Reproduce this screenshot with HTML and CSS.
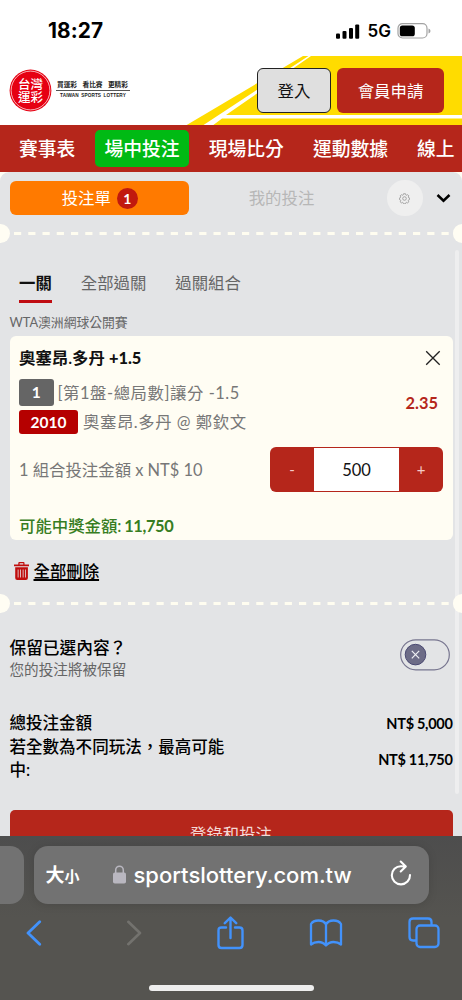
FILE: index.html
```html
<!DOCTYPE html>
<html lang="zh-Hant">
<head>
<meta charset="utf-8">
<meta name="viewport" content="width=device-width, initial-scale=1">
<title>台灣運彩</title>
<link rel="stylesheet" href="styles.css">
</head>
<body>
<div class="phone">
  <div class="status">
    <span class="clock">18:27</span>
    <div class="status-right">
      <svg width="24" height="15" viewBox="0 0 24 15"><rect x="0" y="9.5" width="4" height="5.3" rx="1.1"/><rect x="6.5" y="7" width="4" height="7.8" rx="1.1"/><rect x="13" y="4" width="4" height="10.8" rx="1.1"/><rect x="19.2" y="0.5" width="4" height="14.3" rx="1.1"/></svg>
      <span class="net">5G</span>
      <svg width="34" height="16" viewBox="0 0 34 16"><rect x="1" y=".7" width="29" height="14.3" rx="4.5" fill="none" stroke="#a2a2a2" stroke-width="1.2"/><rect x="2.8" y="2.5" width="15" height="10.8" rx="2.6"/><path d="M31.5 5.4q2 .8 2 2.5t-2 2.5z" fill="#a2a2a2"/></svg>
    </div>
  </div>

  <header class="site">
    <svg class="stripes" width="462" height="70" viewBox="0 0 462 70"><path fill="#ffdc00" d="M303 0H462V70H185z"/><path fill="#fff" d="M311 0H308.500L202 70H212L222 62.5H462V59H226z"/></svg>
    <div class="brand">
      <svg width="43" height="43" viewBox="0 0 43 43"><circle cx="21.5" cy="21.5" r="20.9" fill="#e60012"/><circle cx="21.5" cy="21.5" r="19.4" fill="none" stroke="#fff" stroke-width=".7"/><text class="seal" x="9" y="19.800" textLength="25">台灣</text><text class="seal" x="9" y="32.600" textLength="25">運彩</text></svg>
      <div class="tagline"><div class="tag-zh"><span>買運彩</span><span>看比賽</span><span>更精彩</span></div><div class="tag-en">TAIWAN SPORTS LOTTERY</div></div>
    </div>
    <div class="login">登入</div>
    <div class="signup">會員申請</div>
  </header>

  <nav class="nav"><span>賽事表</span><span class="on">場中投注</span><span>現場比分</span><span>運動數據</span><span>線上</span></nav>

  <div class="backing">
  <main class="slip">
    <div class="slip-head">
      <div class="slip-tab">投注單<b class="count">1</b></div>
      <div class="mine">我的投注</div>
      <div class="gear"><svg width="11" height="11" viewBox="0 0 22 22" fill="none" stroke="#999" stroke-width="1.7"><path d="M9 1.5h4l.6 2.3 1.7.8 2.1-1.2 2.3 2.3-1.2 2.1.8 1.7 2 .5v3l-2 .7-.8 1.8 1.2 2.1-2.3 2.3-2.1-1.2-1.7.8-.6 2.1H9l-.6-2.1-1.7-.8-2.1 1.2-2.3-2.3 1.2-2.1-.8-1.8-2-.7v-3l2-.5.8-1.7-1.2-2.1 2.3-2.3 2.1 1.2 1.7-.8z"/><circle cx="11" cy="11" r="3.600"/></svg></div>
      <svg class="chev" width="15" height="10" viewBox="0 0 15 10"><path d="M1.5 2l6 5.7 6-5.7" fill="none" stroke="#000" stroke-width="2.5"/></svg>
    </div>
    <div class="tear"><i class="notch"></i><svg width="442" height="3"><path d="M4 1.5H442" stroke="#fffdf0" stroke-width="3" stroke-dasharray="7.2 7.05"/></svg><i class="notch end"></i></div>

    <div class="tabs"><span class="on">一關</span><span>全部過關</span><span>過關組合</span></div>
    <div class="league">WTA澳洲網球公開賽</div>

    <section class="card">
      <div class="title"><span>奧塞昂.多丹 <b>+1.5</b></span><svg width="16" height="16" viewBox="0 0 16 16"><path d="M1.2 1.2l13.5 13.5M14.7 1.2L1.2 14.7" stroke="#222" stroke-width="1.3"/></svg></div>
      <div class="pick">
        <div class="lines">
          <div class="line one"><b>1</b><span>[第1盤-總局數]讓分 -1.5</span></div>
          <div class="line two"><b>2010</b><span>奧塞昂.多丹 @ 鄭欽文</span></div>
        </div>
        <div class="odds">2.35</div>
      </div>
      <div class="stake"><span>1 組合投注金額 x NT$ 10</span>
        <div class="stepper"><i>-</i><em>500</em><i>+</i></div>
      </div>
      <div class="win">可能中獎金額: <b>11,750</b></div>
    </section>

    <div class="clear"><svg width="15" height="18" viewBox="0 0 15 18"><path fill="#c00d0d" fill-rule="evenodd" d="M0 2.5h4.3V1q0-1 1-1h4.2q1 0 1 1v1.500H15V4.300H0zM5.600 2.500h3.700V1.300H5.600zM1.200 5.300h12.700V16q0 2-2 2H3.200q-2 0-2-2zM3.700 7.500v8h.8v-8zm2.500 0v8h.8v-8zm2.500 0v8h.8v-8zm2.300 0v8h.8v-8z"/></svg><span>全部刪除</span></div>
    <div class="tear second"><i class="notch"></i><svg width="442" height="3"><path d="M4 1.5H442" stroke="#fffdf0" stroke-width="3" stroke-dasharray="7.2 7.05"/></svg><i class="notch end"></i></div>

    <div class="keep">
      <div><div class="keep-q">保留已選內容？</div><div class="keep-a">您的投注將被保留</div></div>
      <svg width="50" height="32" viewBox="0 0 50 32"><rect x=".7" y=".8" width="48.600" height="30" rx="15" fill="none" stroke="#77758f" stroke-width="1.2"/><circle cx="15.500" cy="15.600" r="10.300" fill="#6d6c87" stroke="#494871" stroke-width="1"/><path d="M11.800 11.900l7.400 7.400m0-7.400l-7.400 7.400" stroke="#f0f0f4" stroke-width="1.200"/></svg>
    </div>
    <div class="totals">
      <div class="total"><span>總投注金額</span><b>NT$ 5,000</b></div>
      <div class="total tall"><span>若全數為不同玩法，最高可能中:</span><b>NT$ 11,750</b></div>
    </div>
    <div class="submit">登錄和投注</div>
    <div class="scrollbar"></div>
  </main>
  </div>

  <footer class="browser">
    <div class="url-row">
      <div class="prev-tab"></div>
      <div class="url">
        <span class="aa">大<small>小</small></span>
        <svg class="lock" width="13" height="19" viewBox="0 0 13 19"><rect y="7.500" width="13" height="11" rx="1.800" fill="#b9b7c0"/><path d="M2.700 8V5.200a3.800 4 0 0 1 7.600 0V8" fill="none" stroke="#b9b7c0" stroke-width="1.500"/></svg>
        <span class="host">sportslottery.com.tw</span>
        <svg class="reload" width="22" height="26" viewBox="0 0 22 26" fill="none" stroke="#fff" stroke-width="2.100" stroke-linecap="round" stroke-linejoin="round"><path d="M20 15A9.100 9.100 0 1 1 11 6.200q2.500-.1 4.500.5M10.700 1.500l5.100 5-5.100 5"/></svg>
      </div>
    </div>
    <div class="tools">
      <svg width="16" height="26" viewBox="0 0 16 26"><path d="M13.700 1.800L2 13l11.700 11.200" fill="none" stroke="#4292fb" stroke-width="2.800" stroke-linecap="round" stroke-linejoin="round"/></svg>
      <svg width="16" height="26" viewBox="0 0 16 26"><path d="M2.300 1.800L14 13 2.300 24.200" fill="none" stroke="#73726e" stroke-width="2.600" stroke-linecap="round" stroke-linejoin="round"/></svg>
      <svg width="27" height="34" viewBox="0 0 27 34" fill="none" stroke="#4292fb" stroke-width="2.400" stroke-linecap="round" stroke-linejoin="round"><path d="M9 11.500H4.500q-3 0-3 3v14.500q0 3 3 3h18q3 0 3-3V14.500q0-3-3-3H18M13.500 22V2M7.800 7.200L13.500 1.500l5.700 5.700"/></svg>
      <svg width="34" height="28" viewBox="0 0 34 28" fill="none" stroke="#4292fb" stroke-width="2.300" stroke-linejoin="round"><path d="M17 5.500Q15 1.500 9.500 1.500T2 5v20.500q3-2.500 7.500-2.500t7.500 3.500q3-3.500 7.500-3.500t7.500 2.500V5q-2-3.500-7.500-3.500T17 5.500zv21"/></svg>
      <svg width="32" height="32" viewBox="0 0 32 32" fill="none" stroke="#4292fb" stroke-width="2.300"><rect x="8.500" y="8.500" width="22" height="21.500" rx="3.500"/><path d="M8.500 23.500H5q-3.500 0-3.500-3.500V5q0-3.500 3.500-3.500h15q3.500 0 3.500 3.500v3.500"/></svg>
    </div>
    <div class="home"></div>
  </footer>
</div>
</body>
</html>
```
FILE: styles.css
```css
* { box-sizing: border-box; }
body { margin: 0; background: #fff; font-family: Lato, "Noto Sans CJK TC", sans-serif; font-size: 16.4px; line-height: 24px; color: #111; }
svg { display: block; flex: none; }
i, em { font-style: normal; }
.phone { width: 462px; height: 1000px; overflow: hidden; display: flex; flex-direction: column; white-space: nowrap; }

.status { height: 56px; display: flex; justify-content: space-between; padding: 19px 31px 0 48px; font-family: Inter, sans-serif; color: #000; }
.clock { font-size: 20.800px; font-weight: 700; letter-spacing: .1px; }
.status-right { display: flex; align-items: center; height: 24px; }
.net { font-size: 17px; font-weight: 600; margin: 0 6px 0 8px; }

.site { height: 69px; display: flex; align-items: flex-start; position: relative; padding: 12px 18px 0 9px; }
.stripes { position: absolute; left: 0; top: 0; }
.brand { position: relative; display: flex; width: 248px; padding-top: 1px; }
.seal { font: 500 12.500px "Noto Sans CJK TC", sans-serif; fill: #fff; }
.tagline { width: 74px; margin: 8px 0 0 4px; color: #222; }
.tag-zh { display: flex; justify-content: space-between; padding: 0 2px 0 1px; height: 14px; border-bottom: 1px solid #555; font-size: 6.700px; line-height: 14px; font-weight: 700; }
.tag-en { font: 700 4.700px/10px "Liberation Sans", sans-serif; text-align: center; word-spacing: 1px; letter-spacing: .1px; }
.login, .signup { position: relative; height: 45px; border-radius: 6px; display: flex; align-items: center; justify-content: center; }
.login { width: 74px; border: 1.500px solid #222; background: #dfdfdf; }
.signup { width: 107px; margin-left: 6px; background: #b5261b; color: #fff; }

.nav { height: 47px; background: #b5261b; display: flex; align-items: center; gap: 10.100px; padding: 0 0 0 9.500px; color: #fff; font-size: 18.800px; font-weight: 500; position: relative; z-index: 1; }
.nav span { height: 37px; line-height: 37px; padding: 0 9.500px; border-radius: 5px; flex: none; }
.nav .on { background: #00ba14; }

.backing { height: 664px; background: #fffdf3; overflow: hidden; }
.slip { position: relative; height: 664px; background: #e3e4e6; border-radius: 9px 9px 0 0; padding: 9px 9.500px 0; }
.slip-head { height: 34px; display: flex; align-items: center; }
.slip-tab { width: 179.500px; height: 34px; background: #ff7a00; border-radius: 6px; color: #fff; display: flex; align-items: center; justify-content: center; gap: 6px; padding-left: 1px; }
.count { width: 21px; height: 21px; border-radius: 50%; background: #c1190e; font-size: 14px; line-height: 21px; text-align: center; }
.mine { width: 185px; text-align: center; color: #b7b7b7; }
.gear { width: 35.500px; height: 35.500px; margin-left: 13px; border-radius: 50%; background: #efefef; display: grid; place-items: center; }
.chev { margin-left: 13.500px; }
.tear { position: relative; z-index: 1; height: 19px; margin: 9px -9.500px 0; display: flex; align-items: center; justify-content: space-between; }
.notch { width: 9.500px; height: 19px; background: #fffdf3; border-radius: 0 10px 10px 0; }
.notch.end { border-radius: 10px 0 0 10px; }

.tabs { height: 32px; margin-top: 28px; padding-left: 9.500px; display: flex; gap: 29px; color: #666; }
.tabs span { line-height: 24px; }
.tabs .on { color: #111; font-weight: 700; border-bottom: 3.500px solid #c00d12; }
.league { font-size: 12.800px; line-height: 18px; color: #666; margin: 10px 0 5px; }
.card { height: 204px; background: #fffdf3; border-radius: 6px; padding: 9.500px 9.500px 0; color: #777; }
.title { display: flex; justify-content: space-between; align-items: center; padding-right: 2px; font-weight: 600; color: #111; }
.pick { display: flex; justify-content: space-between; align-items: center; margin-top: 8.500px; padding-right: 5px; }
.line { display: flex; align-items: center; height: 29px; letter-spacing: .55px; }
.line b { border-radius: 3px; color: #fff; text-align: center; font-size: 15.500px; letter-spacing: 0; flex: none; }
.one b { width: 34.500px; height: 26.500px; line-height: 26px; margin-right: 4px; background: #656565; }
.two b { width: 59px; height: 24px; line-height: 24px; margin-right: 5px; background: #b50000; }
.odds { color: #b5261b; font-weight: 700; padding-bottom: 8px; font-size: 16.400px; }
.stake { display: flex; justify-content: space-between; align-items: center; margin-top: 10.500px; height: 46px; }
.stepper { width: 173px; height: 45.500px; border-radius: 6px; background: #b5261b; display: flex; padding: 1px 0; }
.stepper i { flex: 1; color: #f4cbc8; font-size: 15px; line-height: 43px; text-align: center; }
.stepper em { width: 85px; background: #fff; color: #111; text-align: center; line-height: 44px; font-size: 16.500px; }
.win { color: #377d22; font-weight: 500; margin-top: 21px; }
.win b { font-weight: 700; letter-spacing: -.35px; margin-left: -1.500px; }
.clear { display: flex; align-items: center; gap: 4.500px; margin: 18.500px 0 0 4.500px; font-weight: 500; color: #000; height: 24px; }
.clear span { text-decoration: underline; text-underline-offset: 2px; text-decoration-thickness: 1.500px; }
.tear.second { margin-top: 11.500px; }

.keep { display: flex; justify-content: space-between; margin-top: 23px; height: 47px; padding-right: 3px; }
.keep > svg { margin-top: 3px; }
.keep-q { font-weight: 500; font-size: 16.700px; color: #000; }
.keep-a { font-size: 14.600px; line-height: 20px; color: #666; }
.totals { margin-top: 29px; }
.total { display: flex; justify-content: space-between; align-items: center; font-weight: 500; font-size: 16.550px; line-height: 23.500px; color: #000; }
.total b { font-size: 14.500px; font-weight: 700; letter-spacing: -.3px; }
.tall b { padding-top: 2px; }
.tall span { width: 220px; white-space: normal; }
.submit { height: 44px; margin-top: 27.500px; border-radius: 5px; background: #b5261b; color: #f4d9d6; line-height: 47px; text-align: center; }
.scrollbar { position: absolute; left: 454.500px; top: 78px; width: 4px; height: 544px; background: #eeeeef; border-radius: 2px; }

.browser { position: relative; z-index: 2; height: 164px; background: linear-gradient(#4d4d4d, #555450 50%, #555450); font-family: Inter, sans-serif; }
.url-row { display: flex; padding-top: 10px; gap: 10px; }
.prev-tab { width: 23.500px; height: 58px; background: #727272; border-radius: 0 14px 14px 0; }
.url { width: 395px; height: 58px; border-radius: 14px; background: #727272; box-shadow: 0 1px 10px rgba(0,0,0,.12); color: #fff; display: flex; align-items: center; padding-left: 12px; }
.aa { font-family: "Noto Sans CJK TC", sans-serif; font-size: 19px; font-weight: 700; width: 67px; }
.aa small { font-size: 15px; }
.lock { margin-top: -2px; }
.host { font-size: 22px; font-weight: 500; margin-left: 8px; width: 219px; }
.reload { margin: -4px 0 0 37px; }
.tools { display: flex; align-items: center; justify-content: space-between; height: 34px; margin-top: 12px; padding: 0 22px 0 26px; }
.tools svg:nth-child(2) { margin-left: 19px; }
.tools svg:nth-child(3) { margin-left: 10px; }
.tools svg:nth-child(4) { margin-left: 1px; }
.home { width: 165px; height: 6px; border-radius: 3px; background: #eee; margin: 34.500px auto 0; }
```
